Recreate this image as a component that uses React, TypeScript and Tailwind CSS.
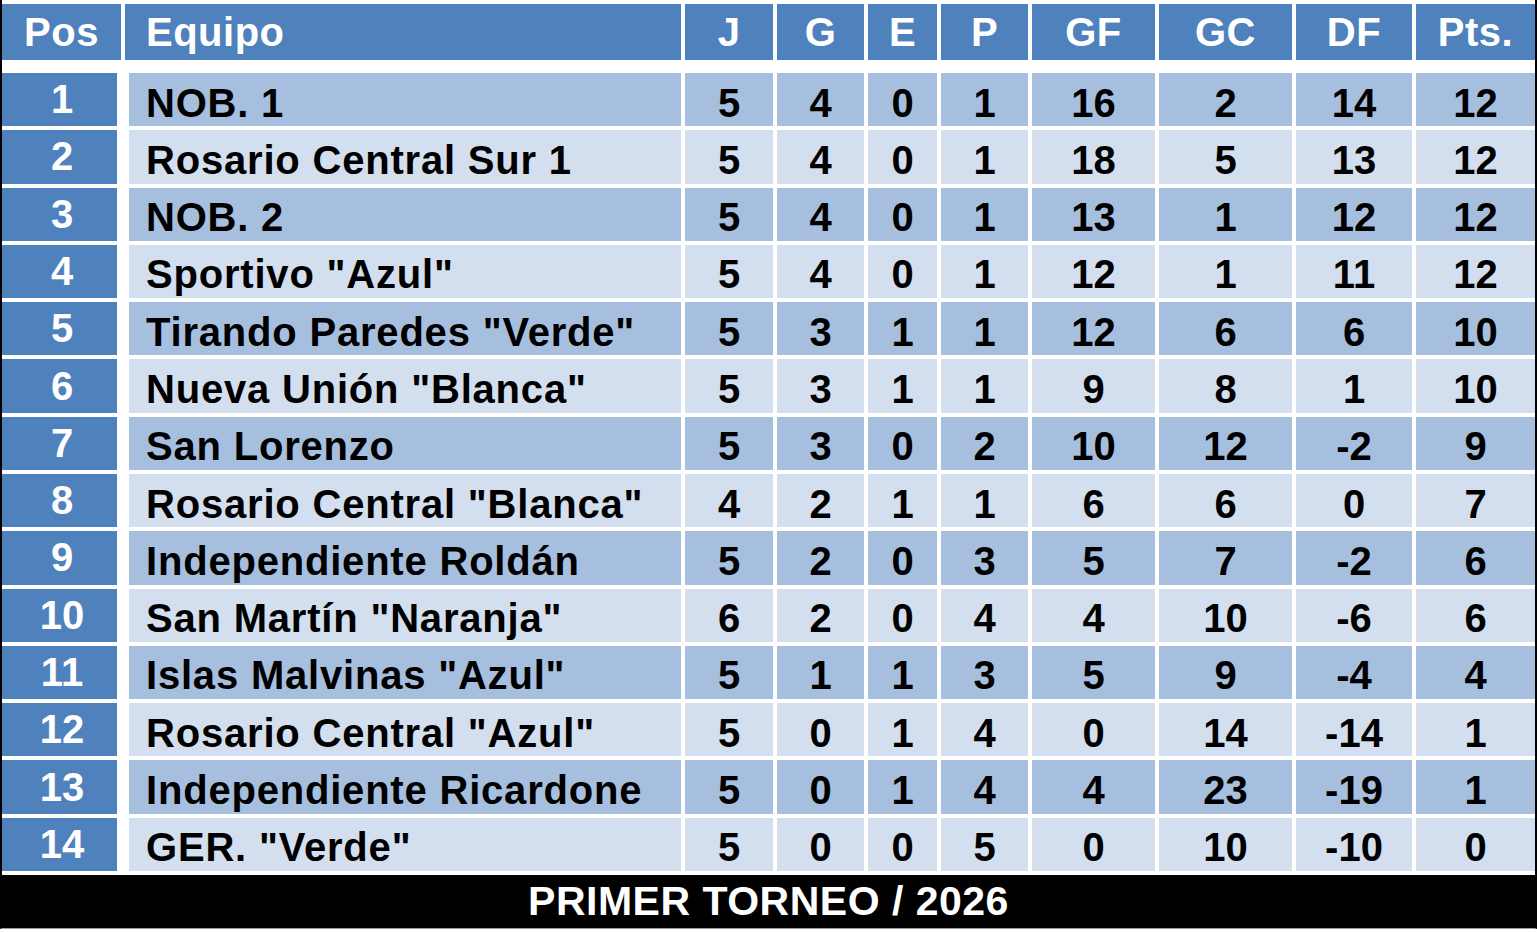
import React from 'react';

type Row = [string, number, number, number, number, number, number, number, number];

const rows: Row[] = [
  ['NOB. 1', 5, 4, 0, 1, 16, 2, 14, 12],
  ['Rosario Central Sur 1', 5, 4, 0, 1, 18, 5, 13, 12],
  ['NOB. 2', 5, 4, 0, 1, 13, 1, 12, 12],
  ['Sportivo "Azul"', 5, 4, 0, 1, 12, 1, 11, 12],
  ['Tirando Paredes "Verde"', 5, 3, 1, 1, 12, 6, 6, 10],
  ['Nueva Unión "Blanca"', 5, 3, 1, 1, 9, 8, 1, 10],
  ['San Lorenzo', 5, 3, 0, 2, 10, 12, -2, 9],
  ['Rosario Central "Blanca"', 4, 2, 1, 1, 6, 6, 0, 7],
  ['Independiente Roldán', 5, 2, 0, 3, 5, 7, -2, 6],
  ['San Martín "Naranja"', 6, 2, 0, 4, 4, 10, -6, 6],
  ['Islas Malvinas "Azul"', 5, 1, 1, 3, 5, 9, -4, 4],
  ['Rosario Central "Azul"', 5, 0, 1, 4, 0, 14, -14, 1],
  ['Independiente Ricardone', 5, 0, 1, 4, 4, 23, -19, 1],
  ['GER. "Verde"', 5, 0, 0, 5, 0, 10, -10, 0],
];

const stats = ['J', 'G', 'E', 'P', 'GF', 'GC', 'DF', 'Pts.'];

const cols = 'grid grid-cols-[119px_556px_88px_87px_69px_87px_123px_133px_116px_119px] gap-x-1';

export default function App() {
  return (
    <div className="w-[1537px] h-[933px] bg-white font-['Liberation_Sans',Arial,sans-serif] font-bold text-[40px] leading-none">
      <div className="h-[929px] border-x-2 border-b border-x-black border-b-[#9a9a9a] flex flex-col pt-1">
        {/* header */}
        <div className={`${cols} h-14 text-white tracking-[0.5px]`}>
          <div className="bg-[#4f81bd] flex items-center justify-center">Pos</div>
          <div className="bg-[#4f81bd] flex items-center pl-[21px]">Equipo</div>
          {stats.map((s) => (
            <div key={s} className="bg-[#4f81bd] flex items-center justify-center">
              {s}
            </div>
          ))}
        </div>

        {/* rows */}
        <div className="mt-[13px] h-[798px] grid grid-rows-[repeat(14,1fr)] gap-y-1">
          {rows.map((r, i) => {
            const bg = i % 2 === 0 ? 'bg-[#a7bfde]' : 'bg-[#d3dfee]';
            return (
              <div key={i} className={cols}>
                <div className="w-[115px] bg-[#4f81bd] text-white flex items-center justify-center pl-[5px] pb-px">
                  {i + 1}
                </div>
                <div className={`${bg} ml-1 flex items-center pl-[17px] pt-[6px] text-black tracking-[0.8px] whitespace-nowrap`}>
                  {r[0]}
                </div>
                {r.slice(1).map((v, j) => (
                  <div key={j} className={`${bg} flex items-center justify-center pt-[6px] text-black`}>
                    {v}
                  </div>
                ))}
              </div>
            );
          })}
        </div>

        {/* footer */}
        <div className="mt-1 h-[53px] bg-black text-white flex items-center justify-center text-[41px] tracking-[0.5px]">
          PRIMER TORNEO / 2026
        </div>
      </div>
    </div>
  );
}
